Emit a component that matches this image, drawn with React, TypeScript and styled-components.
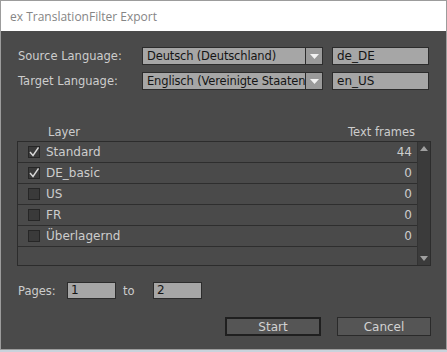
import React from "react";
import styled, { createGlobalStyle } from "styled-components";

const GlobalStyle = createGlobalStyle`
  html, body {
    margin: 0;
    padding: 0;
    background: #c9d3dc;
  }
`;

const Window = styled.div`
  width: 445px;
  border: 1px solid #9c9c9c;
  background: #4a4a4a;
  font-family: "DejaVu Sans", Verdana, sans-serif;
  font-size: 11px;
  color: #cdcdcd;
`;

const TitleBar = styled.div`
  height: 30px;
  background: #ffffff;
  display: flex;
  align-items: center;
  padding-left: 9px;
  font-family: "Open Sans", "Noto Sans", sans-serif;
  font-size: 12px;
  color: #858585;
`;

const Body = styled.div`
  padding: 16px 15px 13px 16px;
  display: flex;
  flex-direction: column;
`;

const LangRow = styled.div<{ $top?: number }>`
  display: flex;
  align-items: center;
  gap: 9px;
  height: 18px;
  margin-top: ${({ $top }) => $top ?? 0}px;
`;

const Label = styled.div<{ $width?: number }>`
  width: ${({ $width }) => $width ?? 125}px;
  margin-right: ${({ $width }) => ($width ? 0 : -9)}px;
  padding-left: 1px;
  box-sizing: border-box;
  white-space: nowrap;
  font-size: 11.5px;
`;

const Select = styled.div`
  display: flex;
  width: 181px;
  height: 18px;
  box-sizing: border-box;
  border: 1px solid #2c2c2c;
  background: #a6a6a6;
`;

const SelectText = styled.div`
  flex: 1;
  padding-left: 4px;
  line-height: 16px;
  font-size: 11.5px;
  letter-spacing: -0.15px;
  color: #151515;
  white-space: nowrap;
  overflow: hidden;
  border-right: 1px solid #2c2c2c;
`;

const SelectArrow = styled.div`
  width: 16px;
  display: flex;
  align-items: center;
  justify-content: center;
  background: #9a9a9a;
`;

const TextField = styled.div<{ $width: number }>`
  width: ${({ $width }) => $width}px;
  height: 18px;
  box-sizing: border-box;
  border: 1px solid #2c2c2c;
  background: #a6a6a6;
  padding-left: 4px;
  line-height: 16px;
  font-size: 12px;
  color: #151515;
`;

const HeaderRow = styled.div`
  display: flex;
  justify-content: space-between;
  align-items: center;
  height: 18px;
  margin-top: 33px;
  padding: 0 16px 0 31px;
  font-size: 11.5px;
`;

const ListBox = styled.div`
  display: flex;
  height: 125px;
  box-sizing: border-box;
  border: 1px solid #2c2c2c;
`;

const Rows = styled.div`
  flex: 1;
`;

const Row = styled.div`
  display: flex;
  align-items: center;
  height: 20px;
  border-bottom: 1px solid #2e2e2e;
  padding: 0 5px 0 10px;
`;

const CheckBox = styled.div`
  width: 12px;
  height: 12px;
  box-sizing: border-box;
  border: 1px solid #262626;
  background: #3a3a3a;
  display: flex;
  align-items: center;
  justify-content: center;
  margin-right: 6px;
`;

const RowName = styled.div`
  flex: 1;
  font-size: 12px;
`;

const RowCount = styled.div`
  font-size: 12px;
`;

const ScrollBar = styled.div`
  width: 12px;
  background: #3b3b3b;
  display: flex;
  flex-direction: column;
  justify-content: space-between;
  align-items: center;
  padding: 4px 0;
  border-left: 1px solid #333;
`;

const PagesRow = styled.div`
  display: flex;
  align-items: center;
  height: 17px;
  margin-top: 16px;
`;

const PagesField = styled(TextField)`
  height: 17px;
  line-height: 15px;
  padding-left: 3px;
`;

const ToLabel = styled.div`
  width: 37px;
  padding-left: 7px;
  box-sizing: border-box;
  font-size: 11.5px;
`;

const ButtonRow = styled.div`
  display: flex;
  justify-content: flex-end;
  gap: 16px;
  margin-top: 18px;
`;

const Button = styled.div<{ $focused?: boolean; $width: number }>`
  width: ${({ $width }) => $width}px;
  height: 19px;
  box-sizing: border-box;
  border: ${({ $focused }) => ($focused ? "2px solid #1f1f1f" : "1px solid #2a2a2a")};
  background: #555555;
  display: flex;
  align-items: center;
  justify-content: center;
  font-size: 12px;
  color: #d2d2d2;
`;

const DropArrow = () => (
  <svg width="9" height="5" viewBox="0 0 9 5">
    <polygon points="0,0 9,0 4.5,5" fill="#f2f2f2" />
  </svg>
);

const Triangle = ({ up }: { up?: boolean }) => (
  <svg width="8" height="5" viewBox="0 0 8 5">
    <polygon points={up ? "0,5 8,5 4,0" : "0,0 8,0 4,5"} fill="#a0a0a0" />
  </svg>
);

const Check = () => (
  <svg width="10" height="10" viewBox="0 0 10 10">
    <polyline points="1,5 4,8.5 9.5,0.5" fill="none" stroke="#d8d8d8" strokeWidth="1.4" />
  </svg>
);

const layers = [
  { name: "Standard", checked: true, frames: 44 },
  { name: "DE_basic", checked: true, frames: 0 },
  { name: "US", checked: false, frames: 0 },
  { name: "FR", checked: false, frames: 0 },
  { name: "Überlagernd", checked: false, frames: 0 },
];

export default function App() {
  return (
    <>
      <GlobalStyle />
      <Window>
        <TitleBar>ex TranslationFilter Export</TitleBar>
        <Body>
          <LangRow>
            <Label>Source Language:</Label>
            <Select>
              <SelectText>Deutsch (Deutschland)</SelectText>
              <SelectArrow>
                <DropArrow />
              </SelectArrow>
            </Select>
            <TextField $width={97}>de_DE</TextField>
          </LangRow>
          <LangRow $top={7}>
            <Label>Target Language:</Label>
            <Select>
              <SelectText>Englisch (Vereinigte Staaten</SelectText>
              <SelectArrow>
                <DropArrow />
              </SelectArrow>
            </Select>
            <TextField $width={97}>en_US</TextField>
          </LangRow>

          <HeaderRow>
            <span>Layer</span>
            <span>Text frames</span>
          </HeaderRow>
          <ListBox>
            <Rows>
              {layers.map((l) => (
                <Row key={l.name}>
                  <CheckBox>{l.checked && <Check />}</CheckBox>
                  <RowName>{l.name}</RowName>
                  <RowCount>{l.frames}</RowCount>
                </Row>
              ))}
            </Rows>
            <ScrollBar>
              <Triangle up />
              <Triangle />
            </ScrollBar>
          </ListBox>

          <PagesRow>
            <Label $width={50}>Pages:</Label>
            <PagesField $width={49}>1</PagesField>
            <ToLabel>to</ToLabel>
            <PagesField $width={49}>2</PagesField>
          </PagesRow>

          <ButtonRow>
            <Button $focused $width={96}>Start</Button>
            <Button $width={94}>Cancel</Button>
          </ButtonRow>
        </Body>
      </Window>
    </>
  );
}
